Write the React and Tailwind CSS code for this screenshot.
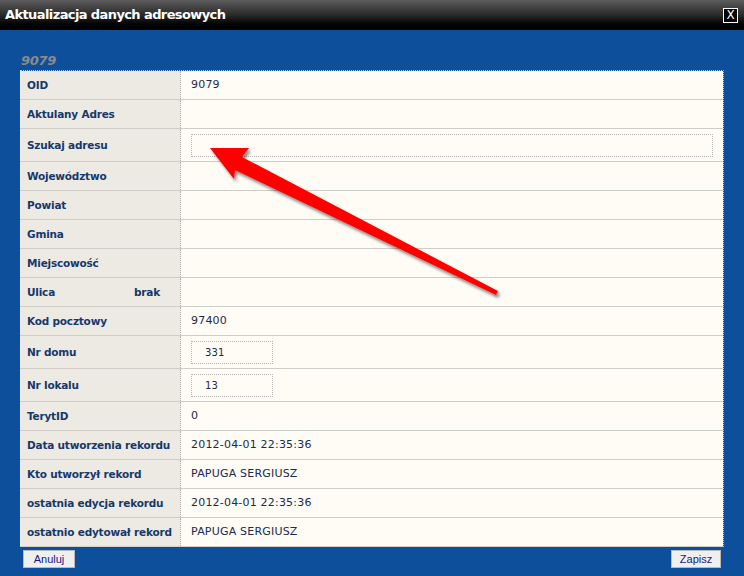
import React from 'react';

const rows = [
  { label: 'OID', value: '9079' },
  { label: 'Aktulany Adres', value: '' },
  { label: 'Szukaj adresu', input: 'wide' },
  { label: 'Województwo', value: '' },
  { label: 'Powiat', value: '' },
  { label: 'Gmina', value: '' },
  { label: 'Miejscowość', value: '' },
  { label: 'Ulica', extra: 'brak', value: '' },
  { label: 'Kod pocztowy', value: '97400' },
  { label: 'Nr domu', input: 'small', value: '331' },
  { label: 'Nr lokalu', input: 'small', value: '13' },
  { label: 'TerytID', value: '0' },
  { label: 'Data utworzenia rekordu', value: '2012-04-01 22:35:36' },
  { label: 'Kto utworzył rekord', value: 'PAPUGA SERGIUSZ' },
  { label: 'ostatnia edycja rekordu', value: '2012-04-01 22:35:36' },
  { label: 'ostatnio edytował rekord', value: 'PAPUGA SERGIUSZ' },
];

function Row({ row }) {
  const tall = !!row.input;
  return (
    <div className={`flex border-b border-[#d0cdc8] ${tall ? 'h-[33px]' : 'h-[29px]'}`}>
      <div className="flex w-[161px] items-center whitespace-nowrap border-r border-dotted border-[#b0b0b0] bg-[#ede9e3] pl-[7px] pt-[1px] text-[10.5px] font-bold tracking-[-0.2px] text-[#16396b]">
        {row.extra ? (
          <>
            <span className="w-[107px]">{row.label}</span>
            <span>{row.extra}</span>
          </>
        ) : (
          row.label
        )}
      </div>
      <div className="flex flex-1 items-center bg-[#fffbf5] pl-[10px] pt-[1px] text-[11px] tracking-[0.2px] text-[#1b2c4a]">
        {row.input === 'wide' && (
          <div className="h-[23px] w-[522px] border border-dotted border-[#b5b5b5]" />
        )}
        {row.input === 'small' && (
          <div className="flex h-[23px] w-[82px] items-center border border-dotted border-[#b5b5b5] pl-[13px] text-[10px]">
            {row.value}
          </div>
        )}
        {!row.input && row.value}
      </div>
    </div>
  );
}

export default function App() {
  return (
    <div className="relative flex h-[576px] w-[744px] flex-col overflow-hidden bg-[#0e4f9b] font-['DejaVu_Sans',Verdana,sans-serif]">
      {/* title bar */}
      <div className="flex h-[30px] items-center justify-between bg-gradient-to-b from-[#5c5c5c] via-[#2a2a2a] to-black pl-[5px] pr-[6px]">
        <span className="text-[13px] font-bold tracking-[-0.6px] text-white">Aktualizacja danych adresowych</span>
        <div className="flex h-[15px] w-[15px] items-center justify-center border border-white bg-black text-[12px] leading-none text-white">
          X
        </div>
      </div>

      <div className="px-[20px] pt-[24px]">
        <div className="mb-[2px] pl-[1px] text-[13px] font-bold italic leading-[14px] tracking-[-0.3px] text-[#8a8a8a]">9079</div>
        <div className="w-[704px] border-t border-r border-dotted border-t-[#d0cdc8] border-r-[#c0c0c0]">
          {rows.map((r) => (
            <Row key={r.label} row={r} />
          ))}
        </div>
        <div className="mt-[3px] flex justify-between px-[3px]">
          <button className="h-[18px] w-[52px] border border-[#b8b8b8] bg-[#efefef] font-['Liberation_Sans',Arial,sans-serif] text-[11px] text-[#1a1a80]">
            Anuluj
          </button>
          <button className="h-[18px] w-[50px] border border-[#b8b8b8] bg-[#efefef] font-['Liberation_Sans',Arial,sans-serif] text-[11px] text-[#1a1a80]">
            Zapisz
          </button>
        </div>
      </div>

      {/* annotation arrow */}
      <svg className="pointer-events-none absolute left-0 top-0" width="744" height="576">
        <defs>
          <filter id="sh" x="-10%" y="-10%" width="130%" height="130%">
            <feDropShadow dx="2" dy="3" stdDeviation="1.5" floodColor="#000" floodOpacity="0.45" />
          </filter>
        </defs>
        <polygon
          points="210,148 249,148 242,157 498,291 496,295 235,170 234,179"
          fill="#ff0000"
          filter="url(#sh)"
        />
      </svg>
    </div>
  );
}
